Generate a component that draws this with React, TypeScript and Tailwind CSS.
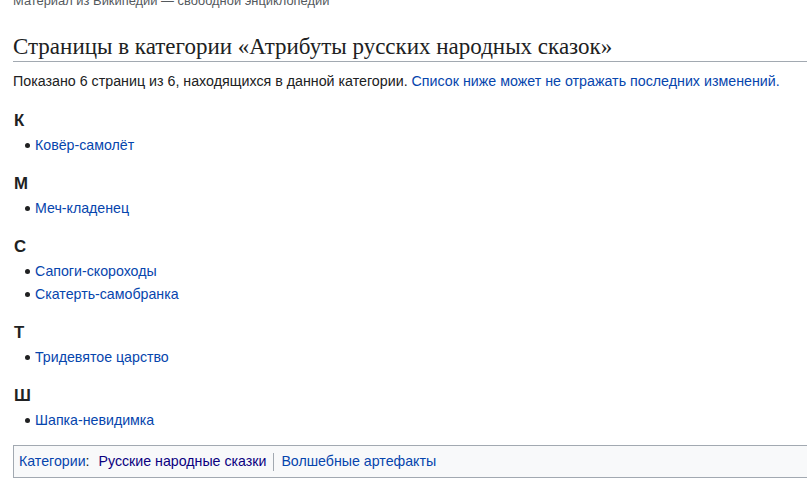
import React from 'react';

const groups = [
  { letter: 'К', items: ['Ковёр-самолёт'] },
  { letter: 'М', items: ['Меч-кладенец'] },
  { letter: 'С', items: ['Сапоги-скороходы', 'Скатерть-самобранка'] },
  { letter: 'Т', items: ['Тридевятое царство'] },
  { letter: 'Ш', items: ['Шапка-невидимка'] },
];

const App: React.FC = () => {
  return (
    <div className="h-[486px] w-[807px] overflow-hidden bg-white text-[#202122] font-['Liberation_Sans',Arial,sans-serif]">
      <div className="w-[830px] pl-[13px]">
        <div className="-mt-[9px] text-[12.9px] leading-[20px] text-[#54595d]">
          Материал из Википедии — свободной энциклопедии
        </div>

        <h2 className="mt-[22px] border-b border-[#a2a9b1] font-['Liberation_Serif',Georgia,serif] text-[23px] leading-[28px]">
          Страницы в категории «Атрибуты русских народных сказок»
        </h2>

        <p className="mt-[8px] text-[14.25px] leading-[22px]">
          Показано 6 страниц из 6, находящихся в данной категории.{' '}
          <a className="text-[#0645ad]">Список ниже может не отражать последних изменений.</a>
        </p>

        <div className="mt-[19px] flex flex-col gap-[17px]">
          {groups.map((g) => (
            <div key={g.letter}>
              <h3 className="pl-[1px] text-[16.8px] font-bold leading-[20px]">{g.letter}</h3>
              <ul className="mt-[3px] flex flex-col">
                {g.items.map((item) => (
                  <li key={item} className="flex items-center text-[14.2px] leading-[23px]">
                    <span className="ml-[12px] mr-[5px] h-[5px] w-[5px] rounded-full bg-[#202122]" />
                    <a className="text-[#0645ad]">{item}</a>
                  </li>
                ))}
              </ul>
            </div>
          ))}
        </div>

        <div className="mt-[13px] flex items-center border border-[#a2a9b1] bg-[#f8f9fa] px-[5px] py-[5px] text-[14.2px] leading-[21px]">
          <a className="text-[#0645ad]">Категории</a>
          <span>:</span>
          <a className="ml-[9px] text-[#0b0080]">Русские народные сказки</a>
          <span className="mx-[7px] h-[18px] w-px bg-[#a2a9b1]" />
          <a className="text-[#0645ad]">Волшебные артефакты</a>
        </div>
      </div>
    </div>
  );
};

export default App;
